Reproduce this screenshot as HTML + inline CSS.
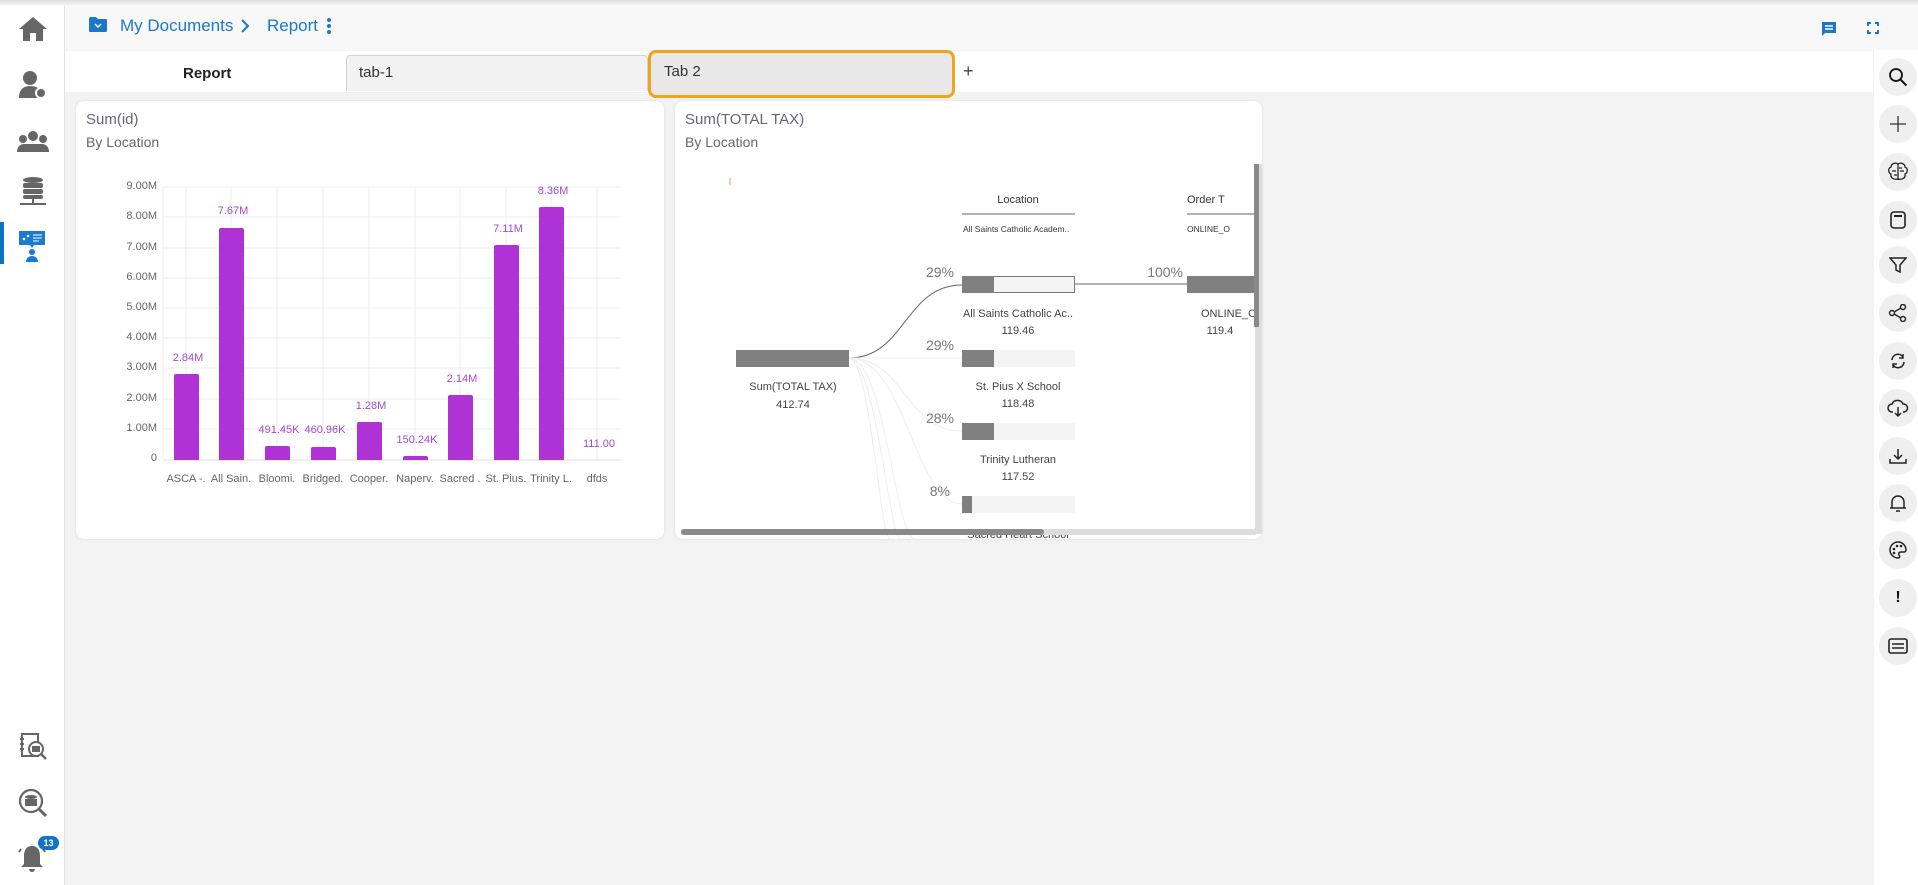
<!DOCTYPE html>
<html><head><meta charset="utf-8"><style>
*{box-sizing:border-box;margin:0;padding:0}
body{width:1918px;height:885px;overflow:hidden;background:#f3f3f3;font-family:"Liberation Sans",sans-serif;position:relative}
.abs{position:absolute}
.side{left:0;top:0;width:65px;height:885px;background:#fff;border-right:1px solid #e2e2e2}
.hdr{left:65px;top:0;width:1853px;height:50px;background:#f8f8f8}
.tabs{left:65px;top:51px;width:1808px;height:41px;background:#fff}
.rside{left:1874px;top:50px;width:44px;height:835px;background:#fff}
.rb{position:absolute;left:5px;width:38px;height:38px;border-radius:50%;background:#efefef;display:flex;align-items:center;justify-content:center}
.card{background:#fff;border-radius:8px;box-shadow:0 0 3px rgba(0,0,0,.1)}
.t1{font-size:15px;color:#6b6378}
.t2{font-size:14px;color:#6b6378}
.yl{font-size:11px;color:#666;text-align:right;width:60px}
.xl{font-size:11px;color:#666;text-align:center;width:50px}
.bv{font-size:11px;color:#a44ad0;text-align:center;width:70px}
.bar{background:#ae32d6;border-radius:2px 2px 0 0;width:25px}
</style></head><body>
<div class="abs" style="left:0;top:0;width:1918px;height:6px;background:linear-gradient(#ddd,#f8f8f8);z-index:5"></div>
<div class="abs side"></div>
<div class="abs" style="left:0;top:222px;width:4px;height:42px;background:#0e72c5"></div>
<svg class="abs" style="left:18px;top:16px" width="30" height="26" viewBox="0 0 30 26"><path d="M15 1L1 13h4v12h7v-8h6v8h7V13h4z" fill="#666"/></svg>
<svg class="abs" style="left:18px;top:70px" width="30" height="30"><circle cx="12" cy="8" r="7" fill="#666"/><path d="M1 28c0-9 5-12 11-12s9 2 10 5v7z" fill="#666"/><circle cx="23" cy="23" r="5" fill="#666" stroke="#fff" stroke-width="2"/></svg>
<svg class="abs" style="left:16px;top:130px" width="34" height="24"><circle cx="17" cy="6" r="5" fill="#666"/><circle cx="7" cy="9" r="4" fill="#666"/><circle cx="27" cy="9" r="4" fill="#666"/><path d="M1 22c0-6 4-8 7-8h18c3 0 7 2 7 8z" fill="#666"/></svg>
<svg class="abs" style="left:18px;top:176px" width="30" height="32"><ellipse cx="15" cy="4" rx="10" ry="3" fill="#666"/><rect x="5" y="7" width="20" height="5" rx="2" fill="#666"/><rect x="5" y="13" width="20" height="5" rx="2" fill="#666"/><rect x="5" y="19" width="20" height="4" rx="2" fill="#666"/><path d="M2 28h26M15 23v5" stroke="#666" stroke-width="2"/></svg>
<svg class="abs" style="left:18px;top:230px" width="28" height="34"><rect x="1" y="1" width="26" height="14" fill="#1a7bd0"/><circle cx="6" cy="9" r="1.3" fill="#fff"/><circle cx="10" cy="6" r="1.3" fill="#fff"/><path d="M15 5h9M15 8h9M15 11h6" stroke="#fff"/><path d="M12 15l2 3 2-3z" fill="#1a7bd0"/><circle cx="14" cy="22" r="3" fill="#1a7bd0"/><path d="M8 32c0-4 3-6 6-6s6 2 6 6z" fill="#1a7bd0"/></svg>
<svg class="abs" style="left:19px;top:732px" width="28" height="30"><rect x="3" y="2" width="16" height="22" fill="none" stroke="#666" stroke-width="2"/><path d="M1 7h4M1 12h4M1 17h4" stroke="#666" stroke-width="2"/><circle cx="17" cy="17" r="7" fill="#fff" stroke="#666" stroke-width="2"/><rect x="13" y="14" width="8" height="6" fill="#666"/><path d="M22 22l5 5" stroke="#666" stroke-width="2.5"/></svg>
<svg class="abs" style="left:18px;top:788px" width="30" height="30"><circle cx="13" cy="13" r="11" fill="none" stroke="#666" stroke-width="2.2"/><ellipse cx="13" cy="9" rx="6" ry="2" fill="#666"/><rect x="7" y="11" width="12" height="7" fill="#666"/><path d="M21 21l7 7" stroke="#666" stroke-width="3"/></svg>
<svg class="abs" style="left:16px;top:842px" width="32" height="32"><path d="M16 4c-6 0-8 5-8 10v8l-3 3h22l-3-3v-8c0-5-2-10-8-10z" fill="#666"/><path d="M13 27a3 3 0 0 0 6 0z" fill="#666"/><path d="M3 10l2-3M29 10l-2-3" stroke="#666" stroke-width="2"/></svg>
<div class="abs" style="left:38px;top:836px;width:21px;height:14px;border-radius:7px;background:#1472c4;color:#fff;font-size:9px;font-weight:bold;text-align:center;line-height:14px">13</div>
<div class="abs hdr"></div>
<svg class="abs" style="left:88px;top:16px" width="20" height="17"><path d="M1 3q0-2 2-2h5l2 2h8q1 0 1 2v10q0 1-1 1H2q-1 0-1-1z" fill="#1a78c9"/><path d="M7 8l3 3 3-3" stroke="#fff" stroke-width="1.5" fill="none"/></svg>
<div class="abs" style="left:120px;top:16px;font-size:17px;color:#1a78c9">My Documents</div>
<svg class="abs" style="left:240px;top:19px" width="10" height="14"><path d="M2 1l6 6-6 6" stroke="#1a78c9" stroke-width="2" fill="none"/></svg>
<div class="abs" style="left:267px;top:16px;font-size:17px;color:#1a78c9">Report</div>
<svg class="abs" style="left:326px;top:17px" width="6" height="18"><circle cx="3" cy="3" r="2" fill="#1a78c9"/><circle cx="3" cy="9" r="2" fill="#1a78c9"/><circle cx="3" cy="15" r="2" fill="#1a78c9"/></svg>
<svg class="abs" style="left:1821px;top:21px" width="16" height="16"><path d="M1 1h14v11H4l-3 3z" fill="#1a78c9"/><path d="M4 5h8M4 8h8" stroke="#fff" stroke-width="1.5"/></svg>
<svg class="abs" style="left:1867px;top:22px" width="12" height="12"><path d="M1 4V1h3M8 1h3v3M11 8v3H8M4 11H1V8" stroke="#1a78c9" stroke-width="2" fill="none"/></svg>
<div class="abs tabs"></div>
<div class="abs" style="left:183px;top:65px;font-size:15px;font-weight:bold;color:#222">Report</div>
<div class="abs" style="left:346px;top:55px;width:302px;height:36px;background:#f2f2f2;border:1px solid #d4d4d4;border-bottom:none;border-radius:4px 4px 0 0;font-size:15px;color:#333;padding:8px 12px">tab-1</div>
<div class="abs" style="left:648px;top:50px;width:307px;height:48px;border:3px solid #f0a41c;border-radius:8px;background:#e8e8e8;font-size:15px;color:#333;padding:10px 13px">Tab 2</div>
<div class="abs" style="left:963px;top:61px;font-size:18px;color:#444">+</div>
<div class="abs rside">
<div class="rb" style="top:8px"><svg width="20" height="20"><circle cx="8" cy="8" r="6" stroke="#111" stroke-width="1.8" fill="none"/><path d="M12.5 12.5l6 6" stroke="#111" stroke-width="2"/></svg></div>
<div class="rb" style="top:55px"><svg width="18" height="18"><path d="M9 1v16M1 9h16" stroke="#333" stroke-width="1.3"/></svg></div>
<div class="rb" style="top:103px"><svg width="22" height="20"><path d="M11 2v16M11 2c-3-2-7 0-7 3-3 1-3 6 0 7-1 4 3 6 7 5M11 2c3-2 7 0 7 3 3 1 3 6 0 7 1 4-3 6-7 5M5 9h4M13 9h4M7 13h3M12 6h3" stroke="#222" stroke-width="1.3" fill="none"/></svg></div>
<div class="rb" style="top:151px"><svg width="18" height="20"><rect x="2" y="2" width="14" height="16" rx="3" stroke="#222" stroke-width="1.6" fill="none"/><path d="M5 6h8" stroke="#222" stroke-width="2"/></svg></div>
<div class="rb" style="top:196px"><svg width="18" height="18"><path d="M1 2h16l-6 7v7l-4-2V9z" stroke="#222" stroke-width="1.5" fill="none"/></svg></div>
<div class="rb" style="top:244px"><svg width="20" height="18"><circle cx="15" cy="3" r="2.5" stroke="#222" fill="none" stroke-width="1.4"/><circle cx="4" cy="9" r="2.5" stroke="#222" fill="none" stroke-width="1.4"/><circle cx="15" cy="15" r="2.5" stroke="#222" fill="none" stroke-width="1.4"/><path d="M6 8l7-4M6 10l7 4" stroke="#222" stroke-width="1.3"/></svg></div>
<div class="rb" style="top:292px"><svg width="18" height="18"><path d="M3 8a6 6 0 0 1 11-3M15 10a6 6 0 0 1-11 3" stroke="#222" stroke-width="1.6" fill="none"/><path d="M14 2v4h-4M4 16v-4h4" stroke="#222" stroke-width="1.4" fill="none"/></svg></div>
<div class="rb" style="top:339px"><svg width="22" height="20"><path d="M6 14H5a4 4 0 0 1 0-8 6 6 0 0 1 11 0 4 4 0 0 1 1 8h-1" stroke="#222" stroke-width="1.5" fill="none"/><path d="M11 9v9M8 15l3 3 3-3" stroke="#222" stroke-width="1.5" fill="none"/></svg></div>
<div class="rb" style="top:387px"><svg width="20" height="18"><path d="M10 2v10M6 8l4 4 4-4M2 12v4h16v-4" stroke="#222" stroke-width="1.5" fill="none"/></svg></div>
<div class="rb" style="top:434px"><svg width="18" height="20"><path d="M3 15V9a6 6 0 0 1 12 0v6zM1 15h16M7 18h4" stroke="#222" stroke-width="1.5" fill="none"/></svg></div>
<div class="rb" style="top:481px"><svg width="20" height="20"><path d="M10 2a8 8 0 0 0 0 16c2 0 2-2 1-3s0-3 2-3h3a2 2 0 0 0 2-2 8 8 0 0 0-8-8z" stroke="#222" stroke-width="1.5" fill="none"/><circle cx="6" cy="9" r="1.3" fill="#222"/><circle cx="9" cy="6" r="1.3" fill="#222"/><circle cx="13" cy="6" r="1.3" fill="#222"/><circle cx="6" cy="13" r="1.3" fill="#222"/></svg></div>
<div class="rb" style="top:529px;font-weight:bold;font-size:16px;color:#111">!</div>
<div class="rb" style="top:577px"><svg width="20" height="16"><rect x="1" y="1" width="18" height="14" rx="2" stroke="#222" stroke-width="1.6" fill="none"/><path d="M4 6h12M4 10h12" stroke="#222" stroke-width="1.6"/></svg></div>
</div>
<div class="abs card" style="left:76px;top:101px;width:588px;height:438px"></div>
<div class="abs t1" style="left:86px;top:111px">Sum(id)</div>
<div class="abs t2" style="left:86px;top:134px">By Location</div>
<svg class="abs" style="left:0;top:0" width="700" height="540">
<g stroke="#ececec" stroke-width="1">
<line x1="163" x2="621" y1="187" y2="187"/><line x1="163" x2="621" y1="217" y2="217"/><line x1="163" x2="621" y1="248" y2="248"/><line x1="163" x2="621" y1="278" y2="278"/><line x1="163" x2="621" y1="308" y2="308"/><line x1="163" x2="621" y1="338" y2="338"/><line x1="163" x2="621" y1="368" y2="368"/><line x1="163" x2="621" y1="399" y2="399"/><line x1="163" x2="621" y1="429" y2="429"/>
<line x1="163" x2="163" y1="187" y2="459"/><line x1="186" x2="186" y1="187" y2="459"/><line x1="231" x2="231" y1="187" y2="459"/><line x1="277" x2="277" y1="187" y2="459"/><line x1="323" x2="323" y1="187" y2="459"/><line x1="369" x2="369" y1="187" y2="459"/><line x1="415" x2="415" y1="187" y2="459"/><line x1="460" x2="460" y1="187" y2="459"/><line x1="506" x2="506" y1="187" y2="459"/><line x1="551" x2="551" y1="187" y2="459"/><line x1="597" x2="597" y1="187" y2="459"/>
</g>
<line x1="163" x2="621" y1="460" y2="460" stroke="#ddd"/>
</svg>
<div class="abs yl" style="left:97px;top:180px">9.00M</div>
<div class="abs yl" style="left:97px;top:210px">8.00M</div>
<div class="abs yl" style="left:97px;top:241px">7.00M</div>
<div class="abs yl" style="left:97px;top:271px">6.00M</div>
<div class="abs yl" style="left:97px;top:301px">5.00M</div>
<div class="abs yl" style="left:97px;top:331px">4.00M</div>
<div class="abs yl" style="left:97px;top:361px">3.00M</div>
<div class="abs yl" style="left:97px;top:392px">2.00M</div>
<div class="abs yl" style="left:97px;top:422px">1.00M</div>
<div class="abs yl" style="left:97px;top:452px">0</div>
<div class="abs bar" style="left:174px;top:374px;height:86px"></div>
<div class="abs bar" style="left:219px;top:228px;height:232px"></div>
<div class="abs bar" style="left:265px;top:446px;height:14px"></div>
<div class="abs bar" style="left:311px;top:447px;height:13px"></div>
<div class="abs bar" style="left:357px;top:422px;height:38px"></div>
<div class="abs bar" style="left:403px;top:456px;height:4px"></div>
<div class="abs bar" style="left:448px;top:395px;height:65px"></div>
<div class="abs bar" style="left:494px;top:245px;height:215px"></div>
<div class="abs bar" style="left:539px;top:207px;height:253px"></div>
<div class="abs bv" style="left:153px;top:352px">2.84M</div>
<div class="abs bv" style="left:198px;top:205px">7.67M</div>
<div class="abs bv" style="left:244px;top:424px">491.45K</div>
<div class="abs bv" style="left:290px;top:424px">460.96K</div>
<div class="abs bv" style="left:336px;top:400px">1.28M</div>
<div class="abs bv" style="left:382px;top:434px">150.24K</div>
<div class="abs bv" style="left:427px;top:373px">2.14M</div>
<div class="abs bv" style="left:473px;top:223px">7.11M</div>
<div class="abs bv" style="left:518px;top:185px">8.36M</div>
<div class="abs bv" style="left:564px;top:438px">111.00</div>
<div class="abs xl" style="left:161px;top:473px">ASCA -.</div>
<div class="abs xl" style="left:206px;top:473px">All Sain.</div>
<div class="abs xl" style="left:252px;top:473px">Bloomi.</div>
<div class="abs xl" style="left:298px;top:473px">Bridged.</div>
<div class="abs xl" style="left:344px;top:473px">Cooper.</div>
<div class="abs xl" style="left:390px;top:473px">Naperv.</div>
<div class="abs xl" style="left:435px;top:473px">Sacred .</div>
<div class="abs xl" style="left:481px;top:473px">St. Pius.</div>
<div class="abs xl" style="left:526px;top:473px">Trinity L.</div>
<div class="abs xl" style="left:572px;top:473px">dfds</div>
<div class="abs card" style="left:675px;top:101px;width:587px;height:438px;overflow:hidden">
<div class="abs t1" style="left:10px;top:10px">Sum(TOTAL TAX)</div>
<div class="abs t2" style="left:10px;top:33px">By Location</div>
<svg class="abs" style="left:0;top:0" width="587" height="438">
<line x1="55" y1="77" x2="55" y2="84" stroke="#f0a41c"/>
<rect x="61" y="249" width="113" height="17" fill="#808080"/>
<g stroke="#eee" fill="none">
<path d="M174 257C230 257 230 330 287 330"/><path d="M174 257C230 257 240 403 287 403"/><path d="M174 257C210 257 220 438 240 438"/><path d="M174 257C200 257 215 438 225 438"/><path d="M174 257C195 257 205 438 215 438"/>
</g>
<path d="M174 257C230 257 230 184 287 184" stroke="#666" fill="none"/>
<path d="M174 257L287 257" stroke="#f2f2f2"/>
<g font-family="Liberation Sans" font-size="11" fill="#333" text-anchor="middle">
<text x="343" y="102">Location</text>
<text x="512" y="102" text-anchor="start">Order T</text>
</g>
<line x1="287" y1="113" x2="400" y2="113" stroke="#666"/>
<text x="288" y="131" font-size="8.5" fill="#333" font-family="Liberation Sans">All Saints Catholic Academ..</text>
<rect x="287.5" y="175.5" width="112" height="16" fill="#f4f4f4" stroke="#777"/>
<rect x="287" y="175" width="32" height="17" fill="#808080"/>
<rect x="287" y="249" width="113" height="17" fill="#f4f4f4"/><rect x="287" y="249" width="32" height="17" fill="#808080"/>
<rect x="287" y="322" width="113" height="17" fill="#f4f4f4"/><rect x="287" y="322" width="32" height="17" fill="#808080"/>
<rect x="287" y="395" width="113" height="17" fill="#f4f4f4"/><rect x="287" y="395" width="10" height="17" fill="#808080"/>
<g font-family="Liberation Sans" font-size="14" fill="#777" text-anchor="end">
<text x="279" y="176">29%</text><text x="279" y="249">29%</text><text x="279" y="322">28%</text><text x="275" y="395">8%</text><text x="508" y="176">100%</text>
</g>
<g font-family="Liberation Sans" font-size="11" fill="#444" text-anchor="middle">
<text x="118" y="289">Sum(TOTAL TAX)</text><text x="118" y="307">412.74</text>
<text x="343" y="216">All Saints Catholic Ac..</text><text x="343" y="233">119.46</text>
<text x="343" y="289">St. Pius X School</text><text x="343" y="306">118.48</text>
<text x="343" y="362">Trinity Lutheran</text><text x="343" y="379">117.52</text>
<text x="343" y="437">Sacred Heart School</text>
<text x="526" y="216" text-anchor="start">ONLINE_O</text>
<text x="545" y="233">119.4</text>
</g>
<line x1="400" y1="183" x2="512" y2="183" stroke="#666"/>
<line x1="512" y1="113" x2="580" y2="113" stroke="#666"/>
<text x="512" y="131" font-size="8.5" fill="#333" font-family="Liberation Sans">ONLINE_O</text>
<rect x="512" y="175" width="68" height="17" fill="#808080"/>
<rect x="580" y="63" width="7" height="370" fill="#ddd"/>
<rect x="579" y="63" width="5" height="163" fill="#8a8a8a"/>
<rect x="6" y="428" width="575" height="6" fill="#ddd"/>
<rect x="6" y="428" width="363" height="6" rx="3" fill="#8a8a8a"/>
</svg>
</div>
</body></html>
